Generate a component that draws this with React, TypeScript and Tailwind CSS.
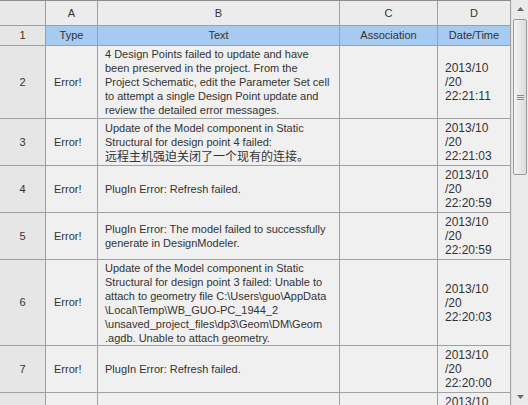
import React from "react";

type Row = {
  n: string;
  h: string;
  text: React.ReactNode[];
  date: string[];
};

const font = { fontFamily: '"Liberation Sans", Arial, "Noto Sans CJK SC", sans-serif' };

const rows: Row[] = [
  {
    n: "2",
    h: "h-[73px]",
    text: [
      "4 Design Points failed to update and have",
      "been preserved in the project. From the",
      "Project Schematic, edit the Parameter Set cell",
      "to attempt a single Design Point update and",
      "review the detailed error messages.",
    ],
    date: ["2013/10", "/20", "22:21:11"],
  },
  {
    n: "3",
    h: "h-[47px]",
    text: [
      "Update of the Model component in Static",
      "Structural for design point 4 failed:",
      <span key="cn" className="text-[12px]" style={{ fontFamily: '"Noto Sans CJK SC", sans-serif' }}>
        远程主机强迫关闭了一个现有的连接。
      </span>,
    ],
    date: ["2013/10", "/20", "22:21:03"],
  },
  {
    n: "4",
    h: "h-[47px]",
    text: ["PlugIn Error: Refresh failed."],
    date: ["2013/10", "/20", "22:20:59"],
  },
  {
    n: "5",
    h: "h-[47px]",
    text: ["PlugIn Error: The model failed to successfully", "generate in DesignModeler."],
    date: ["2013/10", "/20", "22:20:59"],
  },
  {
    n: "6",
    h: "h-[86px]",
    text: [
      "Update of the Model component in Static",
      "Structural for design point 3 failed: Unable to",
      "attach to geometry file C:\\Users\\guo\\AppData",
      "\\Local\\Temp\\WB_GUO-PC_1944_2",
      "\\unsaved_project_files\\dp3\\Geom\\DM\\Geom",
      ".agdb. Unable to attach geometry.",
    ],
    date: ["2013/10", "/20", "22:20:03"],
  },
  {
    n: "7",
    h: "h-[47px]",
    text: ["PlugIn Error: Refresh failed."],
    date: ["2013/10", "/20", "22:20:00"],
  },
  {
    n: "8",
    h: "h-[47px]",
    text: ["PlugIn Error: The model failed to successfully", "generate in DesignModeler."],
    date: ["2013/10", "/20", "22:19:58"],
  },
];

const line = "border-r border-b border-[#a0a0a0]";

export default function App() {
  return (
    <div
      className="w-[528px] h-[405px] overflow-hidden flex bg-[#f0f0f0] text-[11px] text-[#333333]"
      style={font}
    >
      <div className="w-[511px] h-full flex flex-col border-t border-[#8c8c8c]">
        {/* column letters */}
        <div className="flex h-[25px] shrink-0">
          <div className={`w-[46px] ${line} bg-[#e8e8e8]`} />
          <div className={`w-[52px] ${line} bg-[#ececec] flex items-center justify-center`}>A</div>
          <div className={`w-[242px] ${line} bg-[#ececec] flex items-center justify-center`}>B</div>
          <div className={`w-[98px] ${line} bg-[#ececec] flex items-center justify-center`}>C</div>
          <div className={`w-[73px] ${line} bg-[#ececec] flex items-center justify-center`}>D</div>
        </div>
        {/* header row 1 */}
        <div className="flex h-[20px] shrink-0">
          <div className={`w-[46px] ${line} bg-[#e6e6e6] flex items-center justify-center`}>1</div>
          <div className={`w-[52px] ${line} bg-[#a6caf0] flex items-center justify-center`}>Type</div>
          <div className={`w-[242px] ${line} bg-[#a6caf0] flex items-center justify-center`}>Text</div>
          <div className={`w-[98px] ${line} bg-[#a6caf0] flex items-center justify-center`}>Association</div>
          <div className={`w-[73px] ${line} bg-[#a6caf0] flex items-center justify-center`}>Date/Time</div>
        </div>
        {rows.map((r) => (
          <div key={r.n} className={`flex ${r.h} shrink-0`}>
            <div className={`w-[46px] ${line} bg-[#e6e6e6] flex items-center justify-center`}>{r.n}</div>
            <div className={`w-[52px] ${line} bg-[#f0f0f0] flex items-center pl-[8px]`}>Error!</div>
            <div className={`w-[242px] ${line} bg-[#f0f0f0] flex flex-col justify-center pl-[7px] leading-[14px] whitespace-nowrap overflow-hidden`}>
              {r.text.map((t, i) => (
                <div key={i}>{t}</div>
              ))}
            </div>
            <div className={`w-[98px] ${line} bg-[#f0f0f0]`} />
            <div className={`w-[73px] ${line} bg-[#f0f0f0] flex flex-col justify-center pl-[7px] leading-[14px] text-[12px]`}>
              {r.date.map((d, i) => (
                <div key={i}>{d}</div>
              ))}
            </div>
          </div>
        ))}
      </div>
      {/* scrollbar */}
      <div className="w-[17px] h-full flex flex-col items-center bg-[#eaeaea] border-l border-[#e2e2e2]">
        <div className="h-[17px] w-full flex items-center justify-center">
          <svg width="7" height="4" viewBox="0 0 7 4">
            <path d="M0 4 L3.5 0 L7 4 Z" fill="#6a6a6a" />
          </svg>
        </div>
        <div className="mt-[2px] h-[156px] w-[14px] rounded-[2px] border border-[#9b9b9b] bg-gradient-to-r from-[#f4f4f4] to-[#dcdcdc] flex items-center justify-center">
          <svg width="7" height="7" viewBox="0 0 7 7">
            <path d="M0 1.5 H7 M0 3.5 H7 M0 5.5 H7" stroke="#8a8a8a" strokeWidth="1" />
          </svg>
        </div>
        <div className="flex-1" />
        <div className="h-[17px] w-full flex items-center justify-center">
          <svg width="7" height="4" viewBox="0 0 7 4">
            <path d="M0 0 L3.5 4 L7 0 Z" fill="#6a6a6a" />
          </svg>
        </div>
      </div>
    </div>
  );
}
